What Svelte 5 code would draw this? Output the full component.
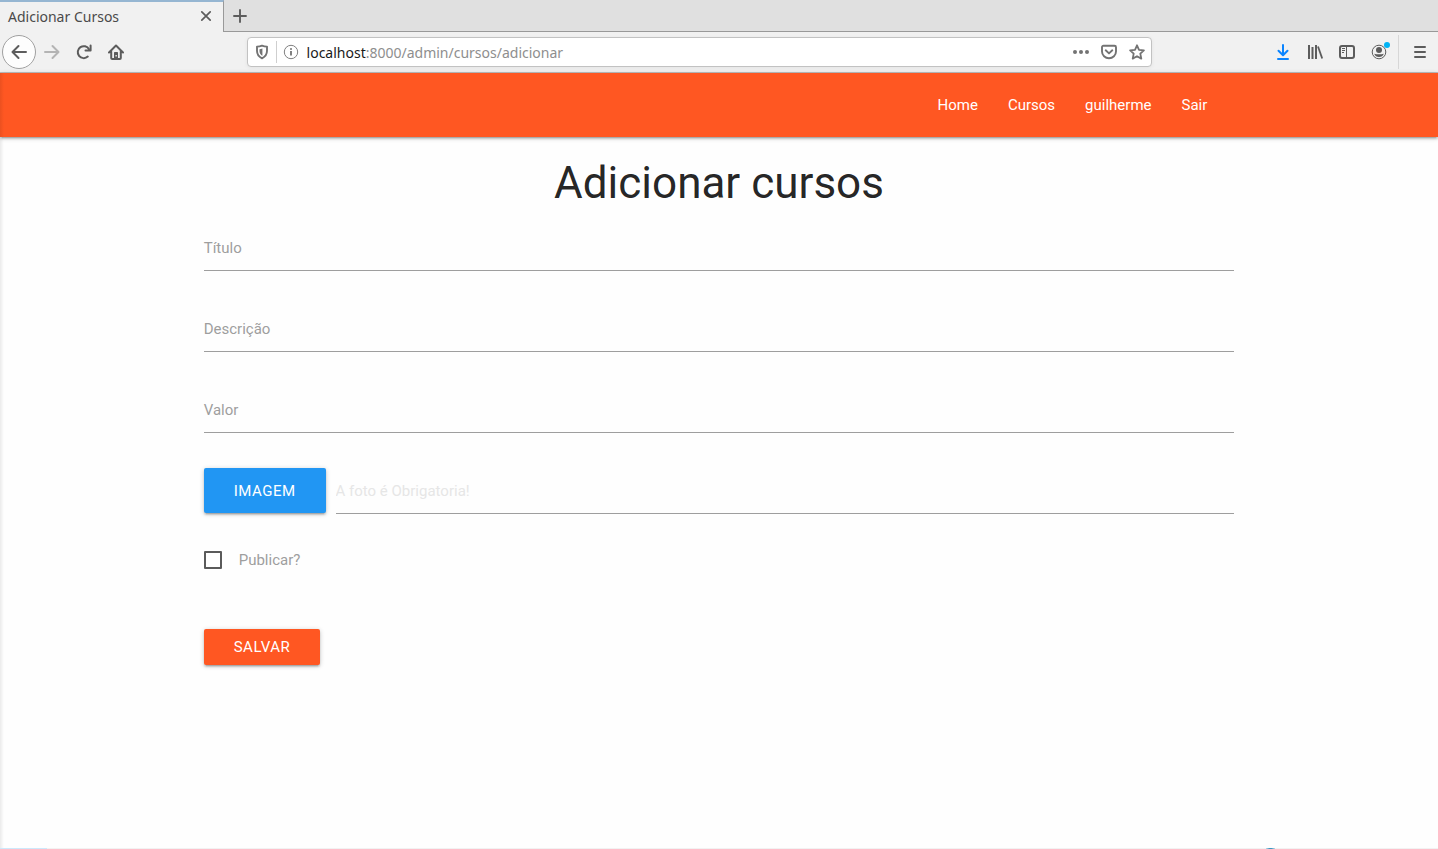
<script>
  let title = $state('');
  let description = $state('');
  let price = $state('');
  let published = $state(false);
  let fileInput;
  let fileName = $state('');

  const links = ['Home', 'Cursos', 'guilherme', 'Sair'];
</script>

<div class="window">
  <header class="browser">
    <div class="tabs">
      <div class="tab">
        <span>Adicionar Cursos</span>
        <button class="tool close" aria-label="Fechar aba">
          <svg width="12" height="12" viewBox="0 0 12 12"><path d="M1.8 1.8 10.2 10.2M10.2 1.8 1.8 10.2" fill="none" stroke="#5c5c5c" stroke-width="1.7" stroke-linecap="round" /></svg>
        </button>
      </div>
      <button class="tool newtab" aria-label="Nova aba">
        <svg width="16" height="16" viewBox="0 0 16 16"><path d="M8 2v12M2 8h12" fill="none" stroke="#5c5c5c" stroke-width="1.9" stroke-linecap="round" /></svg>
      </button>
    </div>

    <div class="toolbar">
      <button class="tool back" aria-label="Voltar">
        <svg width="16" height="16" viewBox="0 0 16 16"><path d="M15 8H1.8M7.5 2 1.5 8l6 6" fill="none" stroke="#5c5c5c" stroke-width="2" stroke-linecap="round" stroke-linejoin="round" /></svg>
      </button>
      <button class="tool" aria-label="Avançar">
        <svg width="16" height="16" viewBox="0 0 16 16"><path d="M1 8h13.2M8.500 2l6 6-6 6" fill="none" stroke="#b4b4b4" stroke-width="2" stroke-linecap="round" stroke-linejoin="round" /></svg>
      </button>
      <button class="tool" aria-label="Recarregar">
        <svg width="16" height="16" viewBox="0 0 16 16"><path d="M11.800 12.600A6 6 0 1 1 13 5.200" fill="none" stroke="#5c5c5c" stroke-width="2" stroke-linecap="round" /><path d="M14.600 1.500V6.600H9.500" fill="none" stroke="#5c5c5c" stroke-width="2" stroke-linecap="round" stroke-linejoin="round" /></svg>
      </button>
      <button class="tool" aria-label="Página inicial">
        <svg width="16" height="16" viewBox="0 0 16 16"><path d="M1 8.500 8 1.500l7 7M3.200 7.500V14c0 .6.4 1 1 1h7.600c.6 0 1-.4 1-1V7.500" fill="none" stroke="#5c5c5c" stroke-width="2" stroke-linecap="round" stroke-linejoin="round" /><path d="M6 9c0-.6.4-1 1-1h2c.6 0 1 .4 1 1v6H6z" fill="#5c5c5c" /><path d="M7.500 11h1.300v1.500H7.500z" fill="#f1f1f1" /></svg>
      </button>
      <div class="spring"></div>
      <div class="url">
        <span class="shield">
          <svg width="14" height="16" viewBox="0 0 14 16"><path d="M7 1.600c1.800.8 3.400 1 5 1v4.200c0 3.400-1.800 6-5 7.500-3.200-1.500-5-4.100-5-7.500V2.600c1.600 0 3.200-.2 5-1z" fill="none" stroke="#737373" stroke-width="1.900" stroke-linejoin="round" /><path d="M7.400 4.600c-1 .3-2 .5-2.900.6v2c0 1.900 1 3.500 2.900 4.600z" fill="#737373" /></svg>
        </span>
        <svg class="info" width="16" height="16" viewBox="0 0 16 16"><circle cx="8" cy="8" r="6.700" fill="none" stroke="#808080" /><path d="M8 7v4.500" stroke="#737373" stroke-width="1.800" /><circle cx="8" cy="4.900" r="1" fill="#737373" /></svg>
        <p class="address">localhost<span>:8000/admin/cursos/adicionar</span></p>
        <svg width="16" height="16" viewBox="0 0 16 16"><g fill="#737373"><circle cx="2" cy="8" r="2" /><circle cx="8" cy="8" r="2" /><circle cx="14" cy="8" r="2" /></g></svg>
        <svg width="16" height="16" viewBox="0 0 16 16"><path d="M2.500 1.800h11c.9 0 1.500.5 1.500 1.400v4.300a7 6.700 0 0 1-14 0V3.200c0-.9.6-1.400 1.500-1.400z" fill="none" stroke="#737373" stroke-width="1.900" /><path d="M4.700 6.300 8 9.400l3.300-3.100" fill="none" stroke="#737373" stroke-width="1.900" stroke-linecap="round" stroke-linejoin="round" /></svg>
        <svg width="16" height="16" viewBox="0 0 16 16"><path d="m8 1.300 2 4.500 4.900.5-3.600 3.300 1 5L8 12.200l-4.300 2.400 1-5-3.600-3.300 4.900-.5z" fill="none" stroke="#737373" stroke-width="1.800" stroke-linejoin="round" /></svg>
      </div>
      <div class="spring"></div>
      <button class="tool" aria-label="Downloads">
        <svg width="16" height="16" viewBox="0 0 16 16"><path d="M8 1v10M3.500 6.700 8 11.200l4.500-4.500M3 15h10" fill="none" stroke="#0a84ff" stroke-width="2" stroke-linecap="round" stroke-linejoin="round" /></svg>
      </button>
      <button class="tool" aria-label="Biblioteca">
        <svg width="16" height="16" viewBox="0 0 16 16"><path d="M2 1v14M5.500 3v12M9 1v14" fill="none" stroke="#5c5c5c" stroke-width="2" /><path d="M11 2.500l4.200 12" fill="none" stroke="#5c5c5c" stroke-width="1.800" /></svg>
      </button>
      <button class="tool" aria-label="Barra lateral">
        <svg width="16" height="16" viewBox="0 0 16 16"><rect x="1" y="2" width="14" height="12" rx="2" fill="none" stroke="#5c5c5c" stroke-width="2" /><path d="M7.500 2v12" stroke="#5c5c5c" /><path d="M3 4.500h3M3 6.500h3M3 8.500h2" stroke="#5c5c5c" /></svg>
      </button>
      <button class="tool account" aria-label="Conta">
        <svg width="16" height="16" viewBox="0 0 16 16"><circle cx="8" cy="8" r="6.800" fill="none" stroke="#5c5c5c" /><circle cx="8" cy="6" r="3" fill="#5c5c5c" /><path d="M3.200 9.800c2.500.7 7.100.7 9.600 0-.6 2-2.500 3.300-4.800 3.300s-4.200-1.300-4.800-3.300z" fill="#5c5c5c" /></svg>
        <span class="badge"></span>
      </button>
      <div class="rule"></div>
      <button class="tool" aria-label="Menu">
        <svg width="16" height="16" viewBox="0 0 16 16"><path d="M3 3h10M3 8h10M3 13h10" fill="none" stroke="#5c5c5c" stroke-width="2" stroke-linecap="round" /></svg>
      </button>
    </div>
  </header>

  <div class="page">
    <nav>
      <ul class="container">
        {#each links as link}
          <li><a href="#{link}">{link}</a></li>
        {/each}
      </ul>
    </nav>

    <main class="container">
      <h1>Adicionar cursos</h1>
      <form onsubmit={(e) => e.preventDefault()}>
        <div class="field">
          <input id="title" type="text" bind:value={title} />
          <label for="title">Título</label>
        </div>
        <div class="field">
          <input id="description" type="text" bind:value={description} />
          <label for="description">Descrição</label>
        </div>
        <div class="field">
          <input id="price" type="text" bind:value={price} />
          <label for="price">Valor</label>
        </div>
        <div class="file">
          <button type="button" class="btn image" onclick={() => fileInput.click()}>IMAGEM</button>
          <input class="path" type="text" aria-label="Imagem" placeholder="A foto é Obrigatoria!" value={fileName} readonly />
          <input type="file" hidden bind:this={fileInput} onchange={() => (fileName = fileInput.files[0]?.name ?? '')} />
        </div>
        <div class="check">
          <input id="published" type="checkbox" bind:checked={published} />
          <label for="published">Publicar?</label>
        </div>
        <button class="btn save">SALVAR</button>
      </form>
    </main>
    <div class="edge"></div>
  </div>

  <footer>
    <div class="strip"></div>
    <div class="mark"></div>
  </footer>
</div>

<style>
  :global(body) {
    margin: 0;
    background: #fefefe;
  }
  .window, .window * {
    box-sizing: border-box;
  }
  .window {
    display: flex;
    flex-direction: column;
    min-height: 100vh;
    font-family: Roboto, sans-serif;
    font-size: 15px;
    color: rgba(0, 0, 0, 0.87);
  }
  svg {
    display: block;
    flex: none;
  }

  .browser {
    background: #f1f1f1;
    border-bottom: 1px solid #bdbdbd;
    font-family: "Noto Sans", sans-serif;
    font-size: 14px;
    color: #4a4a4a;
  }
  .tabs {
    display: flex;
    height: 32px;
    background: #e0e0e0;
  }
  .tabs::after {
    content: "";
    flex: 1;
    border-bottom: 1px solid #999;
  }
  .tab {
    display: flex;
    align-items: center;
    justify-content: space-between;
    width: 224px;
    padding: 0 1px 2px 8px;
    background: #f1f1f1;
    border-top: 2px solid #96b6d2;
    border-right: 1px solid #999;
  }
  .tool {
    position: relative;
    display: grid;
    place-items: center;
    flex: none;
    width: 32px;
    height: 32px;
    padding: 0;
    border: 0;
    background: none;
  }
  .newtab {
    border-bottom: 1px solid #999;
  }
  .tab .close {
    height: 26px;
  }
  .toolbar {
    display: flex;
    align-items: center;
    height: 40px;
    padding: 0 2px;
  }
  .back {
    width: 34px;
    height: 34px;
    background: #fdfdfd;
    border: 1px solid #a0a0a0;
    border-radius: 50%;
  }
  .spring {
    flex: 9;
  }
  .url {
    display: flex;
    align-items: center;
    gap: 12px;
    flex: 70;
    height: 30px;
    padding: 0 6px 0 7px;
    background: #fff;
    border: 1px solid #c2c2c2;
    border-radius: 4px;
    box-shadow: 0 1px 4px rgba(0, 0, 0, 0.06);
  }
  .shield {
    padding: 3px 7px 3px 0;
    border-right: 1px solid #cfcfcf;
  }
  .info {
    margin-left: -6px;
  }
  .address {
    flex: 1;
    margin: 0 0 0 -4px;
    color: #1a1a1a;
  }
  .address span {
    color: #8e8e8e;
  }
  .badge {
    position: absolute;
    top: 6px;
    right: 5px;
    width: 6px;
    height: 6px;
    border-radius: 50%;
    background: #00b3f4;
  }
  .rule {
    width: 1px;
    height: 34px;
    margin: 0 5px 0 3px;
    background: #d7d7d7;
  }

  .page {
    position: relative;
    flex: 1;
  }
  .edge {
    position: absolute;
    inset: 0 auto 0 0;
    width: 4px;
    background: linear-gradient(90deg, rgba(0, 0, 0, 0.08), transparent);
  }
  .container {
    width: 70%;
    margin: 0 auto;
  }
  nav {
    background: #ff5722;
    box-shadow: 0 2px 2px 0 rgba(0, 0, 0, 0.14), 0 3px 1px -2px rgba(0, 0, 0, 0.12), 0 1px 5px 0 rgba(0, 0, 0, 0.2);
  }
  nav ul {
    display: flex;
    justify-content: flex-end;
    padding: 0;
    list-style: none;
  }
  nav a {
    display: block;
    padding: 0 15px;
    line-height: 64px;
    color: #fff;
    text-decoration: none;
  }
  h1 {
    margin: 22px 0 18px;
    font-size: 44px;
    line-height: 48px;
    font-weight: 400;
    text-align: center;
  }
  form {
    display: flex;
    flex-direction: column;
    gap: 35px;
    margin: 0 -12px;
  }
  .field {
    display: grid;
  }
  .field > * {
    grid-area: 1 / 1;
  }
  .field label {
    line-height: 46px;
    color: #9e9e9e;
    pointer-events: none;
  }
  input[type="text"] {
    width: 100%;
    height: 46px;
    padding: 0;
    border: 0;
    border-bottom: 1px solid #9e9e9e;
    border-radius: 0;
    outline: 0;
    background: transparent;
    font: inherit;
  }
  .file {
    display: flex;
    gap: 10px;
  }
  .path::placeholder {
    color: #e6e6e6;
    opacity: 1;
  }
  .btn {
    align-self: flex-start;
    flex: none;
    height: 36px;
    padding: 0 30px;
    border: 0;
    border-radius: 2px;
    font: inherit;
    letter-spacing: 0.5px;
    color: #fff;
    box-shadow: 0 2px 2px 0 rgba(0, 0, 0, 0.14), 0 3px 1px -2px rgba(0, 0, 0, 0.12), 0 1px 5px 0 rgba(0, 0, 0, 0.2);
  }
  .image {
    height: 45px;
    background: #2196f3;
  }
  .save {
    margin-top: 23px;
    background: #ff5722;
  }
  .check {
    display: flex;
    align-items: center;
    gap: 17px;
    height: 22px;
  }
  .check input {
    appearance: none;
    width: 18px;
    height: 18px;
    margin: 0;
    border: 2px solid #5a5a5a;
    border-radius: 1px;
  }
  .check input:checked {
    background: #ff5722;
  }
  .check label {
    color: #9e9e9e;
  }
  footer {
    display: flex;
    justify-content: space-between;
    height: 1px;
    background: #f2f2f2;
  }
  .strip {
    width: 47px;
    background: #cce8fb;
  }
  .mark {
    width: 9px;
    margin-right: 163px;
    background: linear-gradient(90deg, #bcd9e8, #3c94c0 40%, #3c94c0 60%, #bcd9e8);
  }
</style>
